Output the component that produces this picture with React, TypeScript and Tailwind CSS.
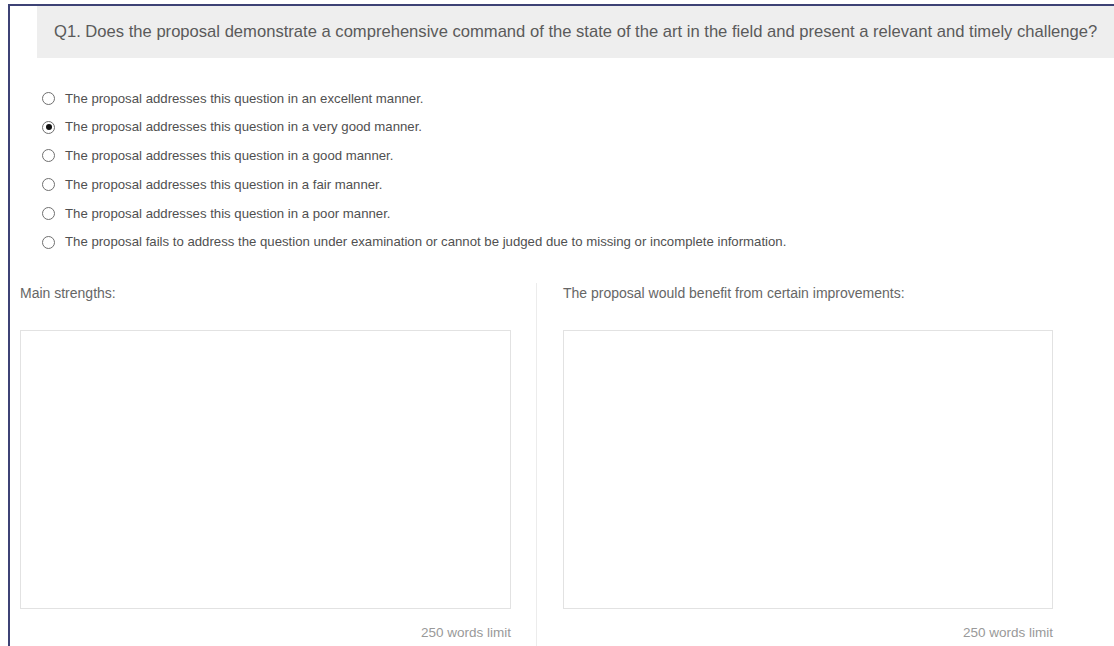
import React from "react";

const options = [
  "The proposal addresses this question in an excellent manner.",
  "The proposal addresses this question in a very good manner.",
  "The proposal addresses this question in a good manner.",
  "The proposal addresses this question in a fair manner.",
  "The proposal addresses this question in a poor manner.",
  "The proposal fails to address the question under examination or cannot be judged due to missing or incomplete information.",
];

function Radio({ checked }: { checked: boolean }) {
  return (
    <span className="flex h-[13px] w-[13px] shrink-0 items-center justify-center rounded-full border border-[#6f6f6f] bg-white">
      {checked && <span className="h-[6px] w-[6px] rounded-full bg-[#111]" />}
    </span>
  );
}

function Field({ label }: { label: string }) {
  return (
    <div className="flex flex-col">
      <div className="h-[20px] text-[14px] leading-[20px] text-[#666]">{label}</div>
      <textarea className="mt-[27px] h-[279px] w-full resize-none border border-[#e2e2e2] bg-white outline-none" />
      <div className="mt-[15px] text-right text-[13.5px] leading-[18px] text-[#999]">250 words limit</div>
    </div>
  );
}

export default function App() {
  const selected = 1;
  return (
    <div
      className="h-[646px] w-[1114px] overflow-hidden bg-white"
      style={{ fontFamily: '"Liberation Sans", Arial, sans-serif' }}
    >
      <div className="ml-[8px] mt-[4px] h-[700px] w-[1200px] border-l-2 border-t-2 border-[#3d4275]">
        <div className="ml-[27px] flex h-[52px] items-center bg-[#eeeeee] pl-[17px] text-[16.6px] text-[#5a5a5a]">
          Q1. Does the proposal demonstrate a comprehensive command of the state of the art in the field and present a relevant and timely challenge?
        </div>

        <div className="mt-[26px] flex flex-col pl-[32px]">
          {options.map((o, i) => (
            <label key={i} className="flex h-[28.8px] items-center gap-[10px] text-[13.2px] text-[#505050]">
              <Radio checked={i === selected} />
              <span>{o}</span>
            </label>
          ))}
        </div>

        <div className="mt-[26px] flex">
          <div className="w-[527px] border-r border-[#ececec] pb-[40px] pl-[10px] pr-[25px]">
            <Field label="Main strengths:" />
          </div>
          <div className="w-[516px] pb-[40px] pl-[26px]">
            <Field label="The proposal would benefit from certain improvements:" />
          </div>
        </div>
      </div>
    </div>
  );
}
